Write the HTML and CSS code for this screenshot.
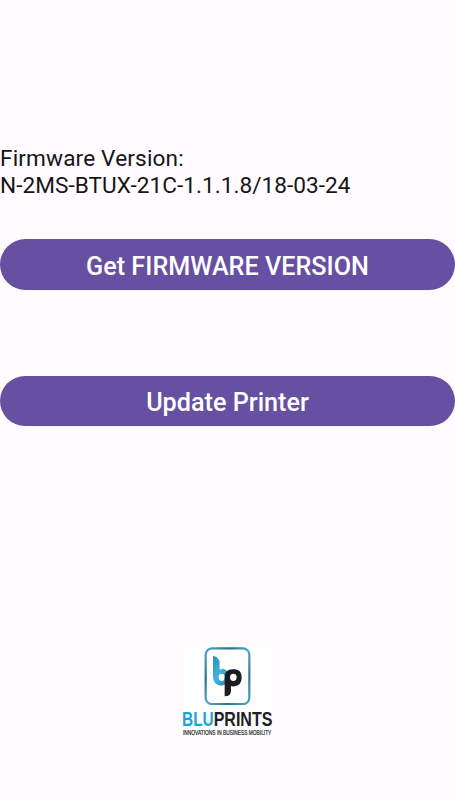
FILE: index.html
```html
<!DOCTYPE html>
<html lang="en">
<head>
<meta charset="utf-8">
<title>Printer Firmware</title>
<link rel="stylesheet" href="styles.css">
</head>
<body>
<main class="screen">
  <p class="version">Firmware Version:<br><span class="version-number">N-2MS-BTUX-21C-1.1.1.8/18-03-24</span></p>
  <button class="button button-get">Get FIRMWARE VERSION</button>
  <button class="button button-update">Update Printer</button>
  <svg class="logo" viewBox="0 0 315 330" role="img" aria-label="Bluprints">
    <defs>
      <linearGradient id="frame" x1="0" y1="0" x2="1" y2="1">
        <stop offset="0" stop-color="#4aa9cc"/>
        <stop offset=".28" stop-color="#286f8c"/>
        <stop offset=".5" stop-color="#4fa8c8"/>
        <stop offset=".75" stop-color="#2c7896"/>
        <stop offset="1" stop-color="#48a4c4"/>
      </linearGradient>
      <linearGradient id="blue" x1="0" y1="0" x2="1" y2="1">
        <stop offset="0" stop-color="#2d8eb4"/>
        <stop offset=".5" stop-color="#42b4dc"/>
        <stop offset="1" stop-color="#2687ad"/>
      </linearGradient>
    </defs>
    <rect x="22" y="24" width="270" height="282" fill="#fefefe"/>
    <rect x="92" y="40" width="131" height="167" rx="19" fill="#fff" stroke="url(#frame)" stroke-width="6.5"/>
    <path fill="url(#blue)" fill-rule="evenodd" d="M114 62Q134 67 134 84V104Q139 101 145 101Q160 104 160 126Q160 152 138 152Q114 150 114 124ZM140 116A9 11 0 1 0 140 138A9 11 0 1 0 140 116Z"/>
    <path fill="#1d1d21" fill-rule="evenodd" d="M149 184V128Q149 103 173 103H180Q200 105 200 127Q200 152 178 154Q172 155 168 153V168Q168 184 149 184ZM175 116A10 11 0 1 0 175 138A10 11 0 1 0 175 116Z"/>
    <text class="logo-name logo-blue" x="21" y="273" textLength="95" lengthAdjust="spacingAndGlyphs">BLU</text>
    <text class="logo-name" x="116" y="273" textLength="176" lengthAdjust="spacingAndGlyphs">PRINTS</text>
    <text class="logo-tagline" x="24" y="300" textLength="265" lengthAdjust="spacingAndGlyphs">INNOVATIONS IN BUSINESS MOBILITY</text>
  </svg>
</main>
</body>
</html>
```
FILE: styles.css
```css
body {
  margin: 0;
  background: #fffbff;
  font-family: Roboto, sans-serif;
}

.screen {
  box-sizing: border-box;
  height: 800px;
  padding-top: 146px;
  display: flex;
  flex-direction: column;
  overflow: hidden;
}

.version {
  margin: 0 0 40px;
  color: #161517;
  font-size: 22.6px;
  line-height: 26.5px;
  letter-spacing: 0.04px;
  white-space: nowrap;
}

.version::first-line {
  letter-spacing: 0.15px;
}

.button {
  flex: none;
  height: 51px;
  padding: 2px 0 0;
  border: 0;
  border-radius: 26px;
  background: #6750a2;
  color: #fff;
  font: 500 25.2px/49px Roboto, sans-serif;
}

.button-get {
  padding-top: 3px;
}

.button-update {
  height: 50px;
  margin-top: 86px;
}

.logo {
  flex: none;
  width: 105px;
  height: 110px;
  margin: 209px 0 0 175px;
}

.logo-name {
  font: 700 61px "Liberation Sans", sans-serif;
  fill: #202024;
}

.logo-blue {
  fill: #1ba6d6;
}

.logo-tagline {
  font: 400 19px "Liberation Sans", sans-serif;
  fill: #252528;
  stroke: #252528;
  stroke-width: 0.6px;
}
```
